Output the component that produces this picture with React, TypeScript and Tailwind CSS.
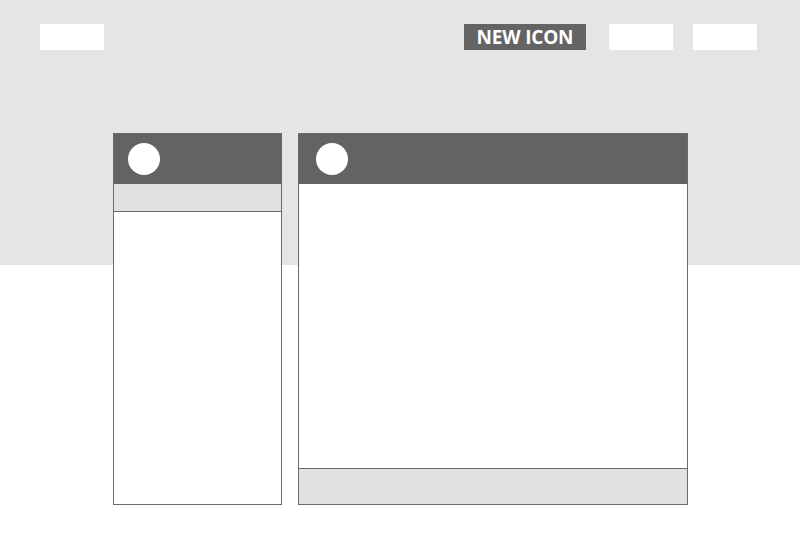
export default function App() {
  return (
    <div className="h-[550px] w-[800px] bg-[linear-gradient(to_bottom,#e4e6e5_265px,#ffffff_265px)] font-['Open_Sans',sans-serif]">
      <header className="flex items-start justify-between pl-10 pr-[43px] pt-6">
        <div className="h-[26px] w-16 bg-white" />
        <nav className="flex items-center">
          <div className="flex h-[26px] w-[122px] items-center justify-center bg-[#646464] text-[19px] font-bold leading-none tracking-[-0.2px] text-white">
            NEW ICON
          </div>
          <div className="ml-[23px] h-[26px] w-16 bg-white" />
          <div className="ml-5 h-[26px] w-16 bg-white" />
        </nav>
      </header>

      <main className="ml-[113px] mt-[83px] flex gap-4">
        <section className="flex h-[372px] w-[169px] flex-col border border-[#6a6a6a] bg-white">
          <div className="flex h-[50px] items-center bg-[#636363] pl-[14px]">
            <div className="h-8 w-8 rounded-full bg-white" />
          </div>
          <div className="h-[28px] border-b border-[#6a6a6a] bg-[#e1e1e1]" />
          <div className="flex-1" />
        </section>

        <section className="flex h-[372px] w-[390px] flex-col border border-[#6a6a6a] bg-white">
          <div className="flex h-[50px] items-center bg-[#636363] pl-[17px]">
            <div className="h-8 w-8 rounded-full bg-white" />
          </div>
          <div className="flex-1 border-b border-[#6a6a6a]" />
          <div className="h-[35px] bg-[#e1e1e1]" />
        </section>
      </main>
    </div>
  );
}
